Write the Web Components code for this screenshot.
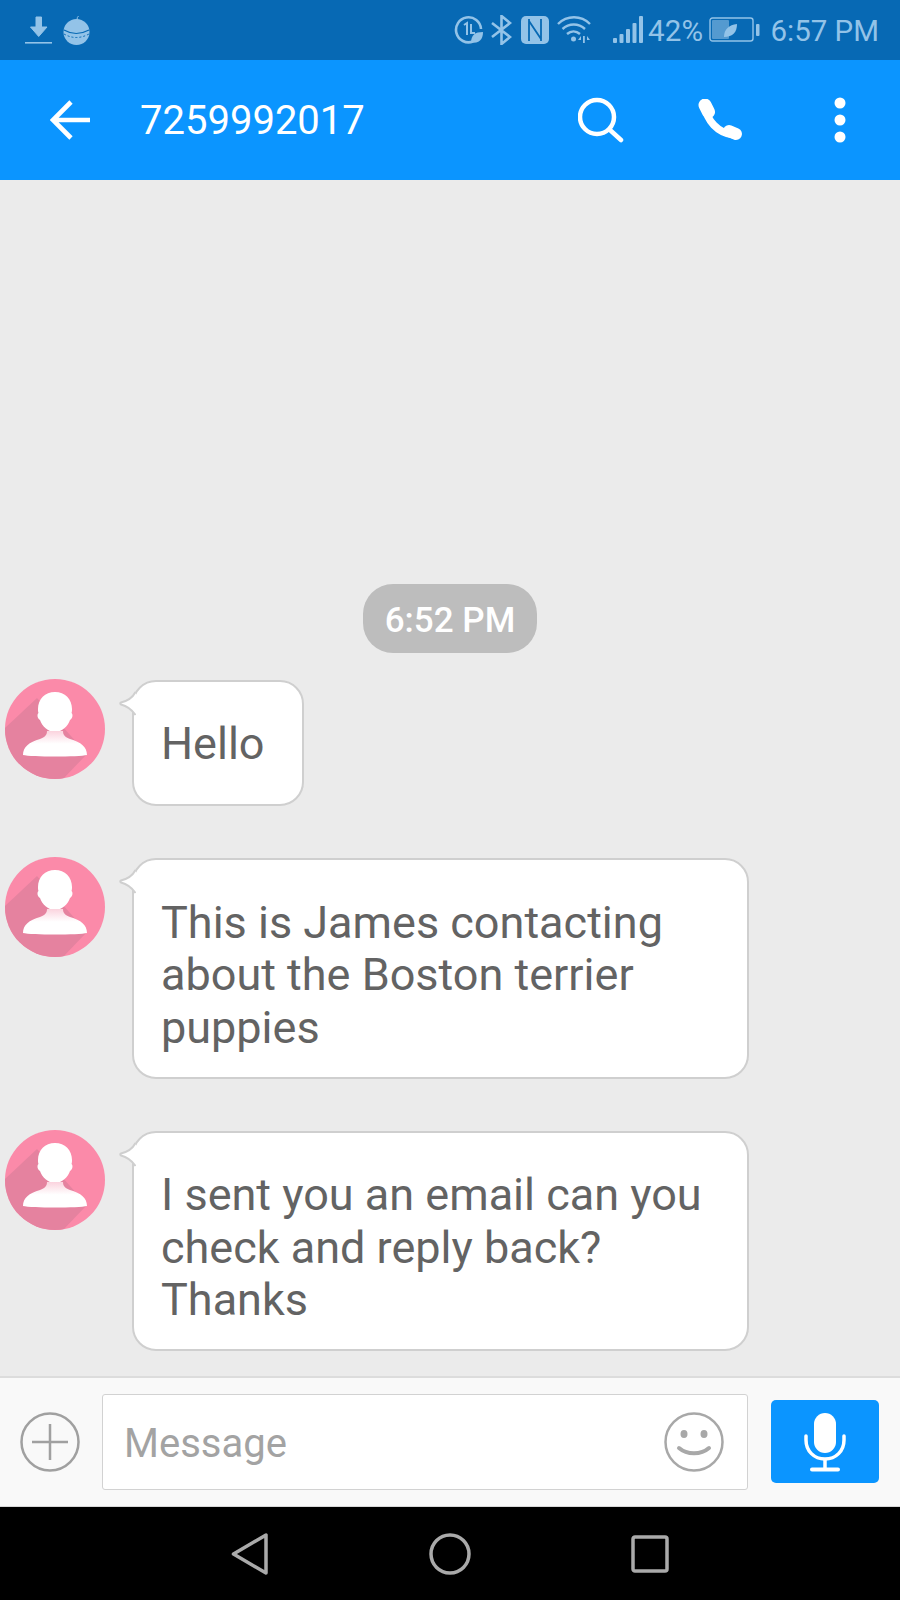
<!DOCTYPE html>
<html>
<head>
<meta charset="utf-8">
<style>
  html,body{margin:0;padding:0;}
  body{width:900px;height:1600px;overflow:hidden;font-family:Roboto,"Liberation Sans",sans-serif;background:#ebebeb;}
  sms-screen{height:1600px;}
</style>
</head>
<body>
<sms-screen>
  <status-bar slot="status" time="6:57 PM" battery="42%"></status-bar>
  <app-bar slot="top" title="7259992017"></app-bar>
  <time-pill>6:52 PM</time-pill>
  <chat-message style="--bubble-pad:29px 37px 27px 27px">Hello</chat-message>
  <chat-message>This is James contacting about the Boston terrier puppies</chat-message>
  <chat-message>I sent you an email can you check and reply back? Thanks</chat-message>
  <composer-bar slot="composer" placeholder="Message"></composer-bar>
  <nav-bar slot="nav"></nav-bar>
</sms-screen>

<script>
function define(name, html, attrs){
  customElements.define(name, class extends HTMLElement {
    constructor(){
      super();
      this.attachShadow({mode:'open'});
    }
    connectedCallback(){
      let out = html;
      (attrs||[]).forEach(a => { out = out.split('{{'+a+'}}').join(this.getAttribute(a)||''); });
      this.shadowRoot.innerHTML = out;
    }
  });
}

define('sms-screen', `
<style>
  :host{display:flex;flex-direction:column;width:900px;}
  main{flex:1;min-height:0;display:flex;flex-direction:column;justify-content:flex-end;padding-bottom:25px;}
</style>
<slot name="status"></slot>
<slot name="top"></slot>
<main><slot></slot></main>
<slot name="composer"></slot>
<slot name="nav"></slot>
`);

define('status-bar', `
<style>
  :host{display:flex;align-items:center;height:60px;background:#0769b4;color:#93c3e8;font:400 29.5px Roboto,sans-serif;padding:0 21px 0 25px;box-sizing:border-box;}
  svg{display:block;flex:none;}
  .fill{flex:1;}
  span{white-space:nowrap;padding-top:1px;}
</style>
<svg width="28" height="30" viewBox="0 0 28 30" fill="#93c3e8" style="margin-top:1px">
  <path d="M11 1h5.500v10H22l-8.300 9.500L5.500 11H11z" stroke="#93c3e8" stroke-linejoin="round"/>
  <rect x="0" y="26" width="27" height="1.600"/>
</svg>
<svg width="27" height="30" viewBox="0 0 27 30" fill="#93c3e8" style="margin-left:10px">
  <circle cx="13.500" cy="17" r="13"/>
  <path d="M14 5q0-3 1.500-4" stroke="#93c3e8" fill="none"/>
  <path d="M1 15q12 7 25 0" stroke="#0769b4" stroke-width="1.200" fill="none"/>
  <path d="M1 19q12 7 25 0" stroke="#0769b4" stroke-width="1" fill="none" stroke-dasharray="2 2"/>
</svg>
<div class="fill"></div>
<svg width="29" height="30" viewBox="0 0 29 30" fill="none" stroke="#93c3e8">
  <path d="M19 26.500A12.500 12.500 0 1 1 27 14" stroke-width="2.600"/>
  <path d="M10 10l3-2v12M17 9v9h4" stroke-width="2"/>
  <path d="M17 28c0-8 4-11 12-11 0 8-4 11-12 11z" fill="#93c3e8" stroke="none"/>
</svg>
<svg width="21" height="30" viewBox="0 0 21 30" fill="none" stroke="#93c3e8" stroke-width="2.600" style="margin-left:8px">
  <path d="M1 8l18 14-8.500 7V1L19 8 1 22"/>
</svg>
<svg width="28" height="28" viewBox="0 0 28 28" style="margin-left:9px">
  <rect width="28" height="28" rx="5" fill="#93c3e8"/>
  <path d="M8 3v22M8 5l12 18M20 3v22" stroke="#0769b4" stroke-width="1.800" fill="none"/>
</svg>
<svg width="34" height="28" viewBox="0 0 34 28" fill="none" stroke="#93c3e8" stroke-width="2.400" style="margin-left:8px">
  <path d="M1 8c9-9 23-9 32 0M5.500 13c6.500-6 16-6 22.500 0M10 18c4-3.500 9-3.500 13 0"/>
  <circle cx="16.500" cy="23" r="2.500" fill="#93c3e8" stroke="none"/>
  <path d="M24 20l-3 4h3zM27 20v8M30 20l3 4h-3z" fill="#93c3e8" stroke="none"/>
  <rect x="26" y="20" width="1.800" height="7" fill="#93c3e8" stroke="none"/>
</svg>
<svg width="30" height="28" viewBox="0 0 30 28" fill="#93c3e8" style="margin-left:22px">
  <rect x="0" y="22" width="4" height="5" rx="1"/>
  <rect x="6.500" y="18" width="4" height="9" rx="1"/>
  <rect x="13" y="13" width="4" height="14" rx="1"/>
  <rect x="19.500" y="7" width="4" height="20" rx="1"/>
  <rect x="26" y="0" width="4" height="27" rx="1"/>
</svg>
<span style="margin-left:5px;letter-spacing:.2px">{{battery}}</span>
<svg width="51" height="26" viewBox="0 0 51 26" style="margin-left:6px">
  <rect x="1" y="1" width="43" height="23" rx="2.500" fill="none" stroke="#93c3e8" stroke-width="1.400"/>
  <rect x="3" y="3" width="17" height="19" rx="1" fill="#93c3e8" opacity=".55"/>
  <rect x="47" y="7" width="3.500" height="12" rx="1" fill="#93c3e8"/>
  <path d="M15 20c0-8 5-12 13-13 0 8-4 13-13 13z" fill="#93c3e8"/>
</svg>
<span style="margin-left:10px">{{time}}</span>
`, ['time','battery']);

define('app-bar', `
<style>
  :host{display:flex;align-items:center;height:120px;background:#0b95ff;color:#fff;}
  svg{display:block;flex:none;}
  h1{margin:0 0 0 50px;font:400 40px Roboto,sans-serif;flex:1;}
</style>
<svg width="40" height="40" viewBox="0 0 40 40" fill="none" stroke="#fff" stroke-width="4.600" style="margin-left:50px">
  <path d="M40 20H3M21 2L3 20 21 38"/>
</svg>
<h1>{{title}}</h1>
<svg width="46" height="46" viewBox="0 0 46 46" fill="none" stroke="#fff" stroke-width="4.500" stroke-linecap="round">
  <circle cx="19" cy="20" r="17"/><path d="M32 33l11 10"/>
</svg>
<svg width="46" height="46" viewBox="0 0 46 46" fill="none" stroke="#fff" stroke-linecap="round" style="margin-left:74px;margin-top:3px">
  <path d="M7 8c2 13 12 26 29 28" stroke-width="7.500"/>
  <path d="M7 6l3.500 7" stroke-width="13"/>
  <path d="M31 32l7 3" stroke-width="12"/>
</svg>
<svg width="12" height="46" viewBox="0 0 12 46" fill="#fff" style="margin-left:90px;margin-right:54px">
  <circle cx="6" cy="6" r="5.500"/><circle cx="6" cy="23" r="5.500"/><circle cx="6" cy="40" r="5.500"/>
</svg>
`, ['title']);

define('time-pill', `
<style>
  :host{display:block;width:174px;height:69px;margin:0 auto 26px;background:#bdbdbd;border-radius:30px;color:#fff;font:500 35px/73px Roboto,sans-serif;text-align:center;}
</style>
<slot></slot>
`);

define('chat-message', `
<style>
  :host{display:flex;align-items:flex-start;margin:0 0 51px 5px;}
  :host(:last-of-type){margin-bottom:0;}
  svg{display:block;flex:none;}
  .bubble{position:relative;box-sizing:border-box;width:fit-content;max-width:617px;min-height:126px;margin:1px 0 0 27px;padding:var(--bubble-pad,36.500px 37px 22.500px 27px);display:flex;align-items:center;background:#fff;border:2px solid #cfcfcf;border-radius:24px;color:#636363;font:400 45px/52.500px Roboto,sans-serif;}
  .tail{position:absolute;left:-15px;top:9px;}
</style>
<svg width="100" height="100" viewBox="0 0 100 100">
  <defs>
    <clipPath id="c"><circle cx="50" cy="50" r="50"/></clipPath>
    <linearGradient id="g" x1="0" y1="0" x2="0" y2="1">
      <stop offset="0" stop-color="#fbd3de"/><stop offset=".5" stop-color="#fff"/>
    </linearGradient>
  </defs>
  <circle cx="50" cy="50" r="50" fill="#fb8aa9"/>
  <path d="M32 19L82 75 58 100H0V49z" fill="#e5829f" clip-path="url(#c)"/>
  <path d="M50 13c10 0 17 7 17 17 0 1 0 3-.5 4 1.500 1 1.500 5-1.500 7-2 6-8 12-15 12s-13-6-15-12c-3-2-3-6-1.500-7-.5-1-.5-3-.5-4 0-10 7-17 17-17z" fill="#fff"/>
  <path d="M42 52h16c0 4 2 6 7 8 11 3 17 8 17 16-8 2-56 2-64 0 0-8 6-13 17-16 5-2 7-4 7-8z" fill="url(#g)"/>
</svg>
<div class="bubble">
  <svg class="tail" width="17" height="26" viewBox="0 0 17 26">
    <path d="M17 1C14 6 8 10 2 11.500c-1 .5-1 1.500 0 2C8 15 13 19 17 24z" fill="#fff"/>
    <path d="M16.500 1C14 6 8 10 2 11.500c-1 .5-1 1.500 0 2C8 15 13 19 16.500 24" fill="none" stroke="#cfcfcf" stroke-width="2"/>
  </svg>
  <div><slot></slot></div>
</div>
`);

define('composer-bar', `
<style>
  :host{display:flex;align-items:center;box-sizing:border-box;height:131px;background:#f9f9f9;border-top:2px solid #dcdcdc;border-bottom:1px solid #d8d8d8;padding-left:20px;}
  svg{display:block;flex:none;}
  .input{box-sizing:border-box;width:646px;height:96px;margin-left:22px;padding:0 23px 0 21px;display:flex;align-items:center;background:#fff;border:1.500px solid #d2d2d2;border-radius:3px;}
  .input span{flex:1;color:#a3a3a3;font:400 40px Roboto,sans-serif;padding-top:3px;}
  .mic{width:108px;height:83px;margin:-1px 0 0 23px;background:#0b95ff;border-radius:5px;display:flex;align-items:center;justify-content:center;}
</style>
<svg width="60" height="60" viewBox="0 0 60 60" fill="none" stroke="#a0a0a0" stroke-width="2.500">
  <circle cx="30" cy="30" r="28.500"/><path d="M30 12v36M12 30h36"/>
</svg>
<div class="input">
  <span>{{placeholder}}</span>
  <svg width="60" height="60" viewBox="0 0 60 60" fill="none" stroke="#a8a8a8" stroke-width="2.500">
    <circle cx="30" cy="30" r="28.500"/>
    <ellipse cx="20" cy="22" rx="3.500" ry="4" fill="#a8a8a8" stroke="none"/>
    <ellipse cx="40" cy="22" rx="3.500" ry="4" fill="#a8a8a8" stroke="none"/>
    <path d="M15 36c8 7 22 7 30 0" stroke-width="4" stroke-linecap="round"/>
  </svg>
</div>
<div class="mic">
  <svg width="42" height="60" viewBox="0 0 42 60" fill="none" stroke="#fff" stroke-width="3.500">
    <rect x="10" y="1" width="22" height="40" rx="11" fill="#fff" stroke="none"/>
    <path d="M2 24v4c0 11 8 19 19 19s19-8 19-19v-4" stroke-linecap="round"/>
    <path d="M21 47v10"/>
    <path d="M8 57.500h26" stroke-width="4" stroke-linecap="round"/>
  </svg>
</div>
`, ['placeholder']);

define('nav-bar', `
<style>
  :host{display:flex;align-items:center;justify-content:center;height:93px;background:#000;padding-right:1px;}
  svg{display:block;flex:none;}
</style>
<svg width="38" height="42" viewBox="0 0 38 42" fill="none" stroke="#aaa" stroke-width="3.500" stroke-linejoin="round">
  <path d="M2.500 21L35 2v38z"/>
</svg>
<svg width="42" height="42" viewBox="0 0 42 42" fill="none" stroke="#aaa" stroke-width="3.500" style="margin-left:160px">
  <circle cx="21" cy="21" r="19"/>
</svg>
<svg width="38" height="38" viewBox="0 0 38 38" fill="none" stroke="#aaa" stroke-width="3.500" style="margin-left:160px">
  <rect x="2" y="2" width="34" height="34" rx="2"/>
</svg>
`);
</script>
</body>
</html>
